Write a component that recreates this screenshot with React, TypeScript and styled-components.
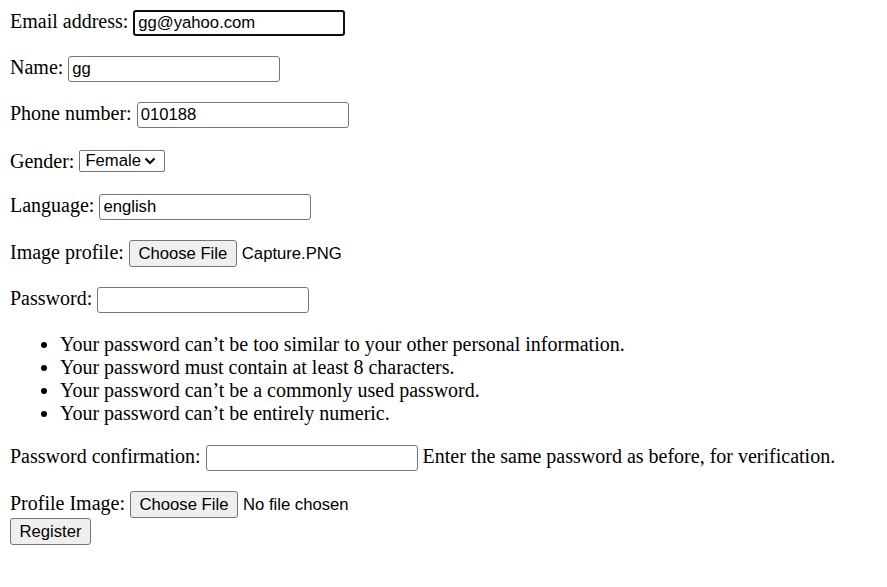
import React from "react";
import styled, { createGlobalStyle } from "styled-components";

const GlobalStyle = createGlobalStyle`
  html, body { background: #ffffff; }
  body {
    margin: 10px;
    font-family: "Liberation Serif", "Times New Roman", serif;
    font-size: 20px;
    color: #000000;
  }
`;

const Form = styled.form`
  display: block;
`;

const Field = styled.p<{ $inset?: boolean }>`
  margin: 0 0 20px;
  padding: ${(p) => (p.$inset ? "2px 0 1px" : "0")};
`;

const Line = styled.div`
  margin: 0;
`;

const Label = styled.label``;

const TextInput = styled.input<{ $focused?: boolean }>`
  box-sizing: border-box;
  width: 212px;
  height: 26px;
  padding: 1px 3px;
  font-family: "Liberation Sans", Arial, sans-serif;
  font-size: 16.67px;
  color: #000;
  background: #fff;
  border: ${(p) => (p.$focused ? "2px solid #101010" : "1.25px solid #767676")};
  border-radius: 3px;
  outline: none;
  vertical-align: baseline;
  margin: 0;
`;

const SelectBox = styled.span`
  display: inline-block;
  box-sizing: border-box;
  height: 22px;
  width: 86px;
  padding: 0 4px 0 5px;
  font-family: "Liberation Sans", Arial, sans-serif;
  font-size: 16.67px;
  line-height: 19.5px;
  border: 1.25px solid #767676;
  border-radius: 2px;
  background: #fff;
  white-space: nowrap;
  vertical-align: 2px;

  svg {
    margin-left: 3px;
    vertical-align: 1px;
  }
`;

const FileButton = styled.button<{ $w: number }>`
  box-sizing: border-box;
  width: ${(p) => p.$w}px;
  height: 27px;
  padding: 0 8px;
  margin: 0;
  font-family: "Liberation Sans", Arial, sans-serif;
  font-size: 16.67px;
  color: #000;
  background: #efefef;
  border: 1.25px solid #767676;
  border-radius: 3px;
  vertical-align: baseline;
`;

const FileName = styled.span`
  font-family: "Liberation Sans", Arial, sans-serif;
  font-size: 16.67px;
  margin-left: 5px;
`;

const HelpList = styled.ul`
  margin: 0 0 20px;
  padding-left: 50px;
  line-height: 23px;
`;

const HelpText = styled.span``;

const Chevron = () => (
  <svg width="12" height="8" viewBox="0 0 12 8" aria-hidden="true">
    <path d="M1.5 1.5 L6 6 L10.5 1.5" fill="none" stroke="#000" strokeWidth="2.2" />
  </svg>
);

export default function App() {
  return (
    <>
      <GlobalStyle />
      <Form>
        <Field>
          <Label>Email address:</Label> <TextInput $focused defaultValue="gg@yahoo.com" />
        </Field>
        <Field>
          <Label>Name:</Label> <TextInput defaultValue="gg" />
        </Field>
        <Field>
          <Label>Phone number:</Label> <TextInput defaultValue="010188" />
        </Field>
        <Field $inset>
          <Label>Gender:</Label>{" "}
          <SelectBox>
            Female
            <Chevron />
          </SelectBox>
        </Field>
        <Field>
          <Label>Language:</Label> <TextInput defaultValue="english" />
        </Field>
        <Field>
          <Label>Image profile:</Label> <FileButton type="button" $w={108}>Choose File</FileButton>
          <FileName>Capture.PNG</FileName>
        </Field>
        <Field>
          <Label>Password:</Label> <TextInput type="password" />
        </Field>
        <HelpList>
          <li>Your password can’t be too similar to your other personal information.</li>
          <li>Your password must contain at least 8 characters.</li>
          <li>Your password can’t be a commonly used password.</li>
          <li>Your password can’t be entirely numeric.</li>
        </HelpList>
        <Field>
          <Label>Password confirmation:</Label> <TextInput type="password" />{" "}
          <HelpText>Enter the same password as before, for verification.</HelpText>
        </Field>
        <Line>
          <Label>Profile Image:</Label> <FileButton type="button" $w={108}>Choose File</FileButton>
          <FileName>No file chosen</FileName>
        </Line>
        <Line>
          <FileButton type="submit" $w={81}>Register</FileButton>
        </Line>
      </Form>
    </>
  );
}
